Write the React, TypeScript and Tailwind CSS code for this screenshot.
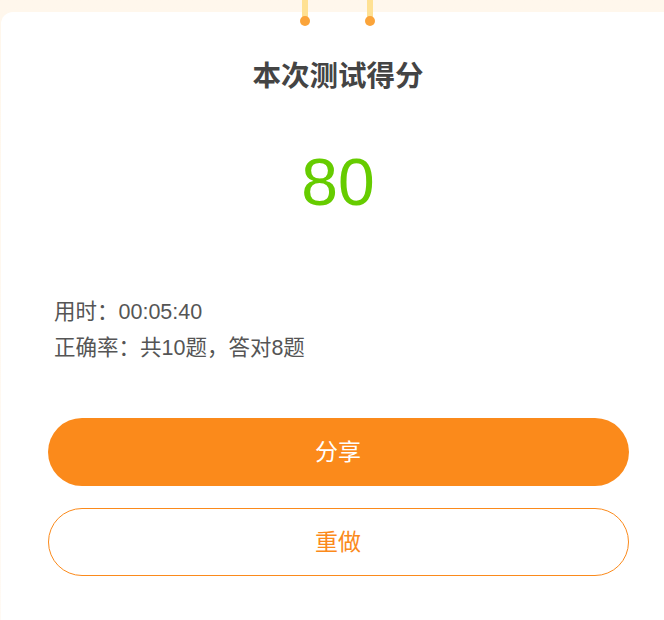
export default function App() {
  const font = "font-['Liberation_Sans','Noto_Sans_CJK_SC',sans-serif]";
  return (
    <div className={`relative h-[620px] w-[664px] overflow-hidden bg-gradient-to-b from-[#fff7ec] to-[#fffaf4] ${font}`}>
      {/* hanging strings */}
      <div className="absolute left-[300px] top-0 z-10 flex flex-col items-center">
        <div className="h-[19px] w-[6px] bg-[#ffe193]" />
        <div className="-mt-[3px] h-[10px] w-[10px] rounded-full bg-[#fba43a]" />
      </div>
      <div className="absolute left-[365px] top-0 z-10 flex flex-col items-center">
        <div className="h-[19px] w-[6px] bg-[#ffe193]" />
        <div className="-mt-[3px] h-[10px] w-[10px] rounded-full bg-[#fba43a]" />
      </div>

      <div className="ml-[1px] mt-[12px] flex h-[640px] w-[674px] flex-col items-center rounded-[12px] bg-white px-[46px]">
        <h1 className="mt-[46px] text-[28.5px] font-bold leading-[36px] text-[#444]">本次测试得分</h1>
        <div className="mt-[52px] text-[66px] leading-[72px] text-[#66cc00]">80</div>

        <div className="mt-[76px] w-full pl-[7px] text-[21.5px] leading-[36px] text-[#555]">
          <p>用时：00:05:40</p>
          <p>正确率：共10题，答对8题</p>
        </div>

        <button className="mt-[52px] flex h-[68px] w-[581px] items-center justify-center rounded-full bg-[#fb8a1b] text-[23px] text-white">
          分享
        </button>
        <button className="mt-[22px] flex h-[68px] w-[581px] items-center justify-center rounded-full border border-[#fb8a1b] bg-white text-[23px] text-[#fb8a1b]">
          重做
        </button>
      </div>
    </div>
  );
}
